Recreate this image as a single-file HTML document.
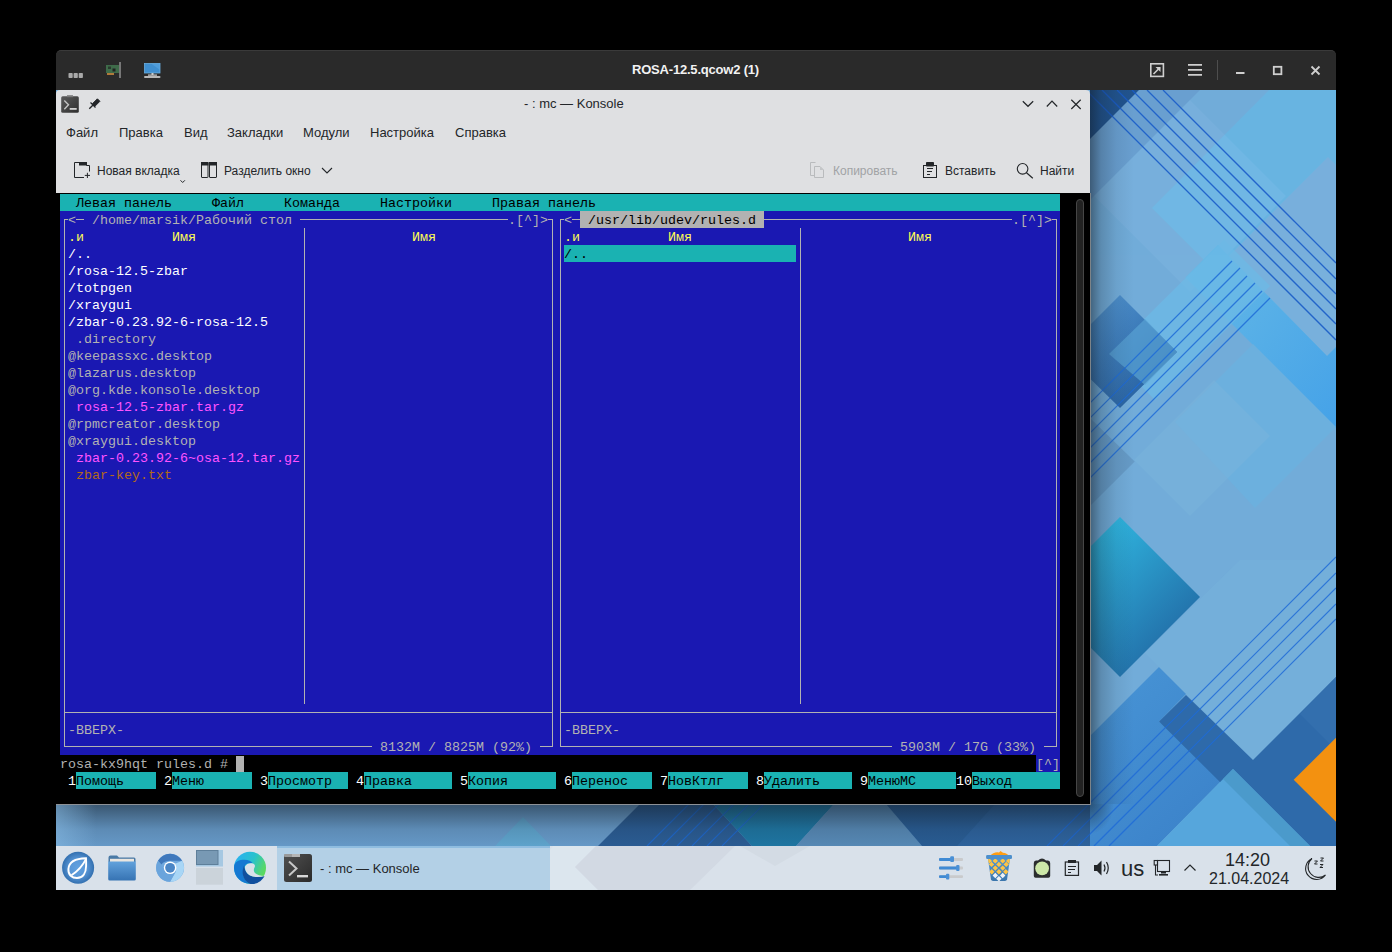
<!DOCTYPE html>
<html><head><meta charset="utf-8">
<style>
*{margin:0;padding:0;box-sizing:border-box}
html,body{width:1392px;height:952px;background:#000;overflow:hidden;position:relative;font-family:"Liberation Sans",sans-serif}
#vm{position:absolute;left:56px;top:50px;width:1280px;height:840px;border-radius:5px 5px 0 0;overflow:hidden;background:#2a2a2a}
#vmtitle{position:absolute;left:0;top:0;width:1280px;height:40px;background:#2a2a2a;border-top:1px solid #3a3a3a;border-radius:5px 5px 0 0}
#wall{position:absolute;left:0;top:40px;width:1280px;height:756px}
#konsole{position:absolute;left:56px;top:90px;width:1034px;height:715px;background:#dfe0e2;border-radius:4px 4px 0 0;overflow:hidden}
#term{position:absolute;left:0;top:103px;width:1034px;height:611px;background:#000}
#kbot{position:absolute;left:0;top:714px;width:1034px;height:1px;background:#8d9196}
#sb{position:absolute;left:1020px;top:109px;width:8px;height:598px;border-radius:4px;background:#222;border:1px solid #464646}
.b{position:absolute;height:17px}
.t{position:absolute;height:17px;line-height:19px;font-family:"Liberation Mono",monospace;font-size:13.333px;white-space:pre}
.l{position:absolute;background:#b2b2b2}
.ui{position:absolute;white-space:pre;color:#232629;font-size:13px;line-height:16px}
#taskbar{position:absolute;left:56px;top:846px;width:1280px;height:44px;background:#d9e1ea}
#task{position:absolute;left:221px;top:0;width:273px;height:44px;background:#b3d0e6;border-top:2px solid #8fbde0}
#ov{position:absolute;left:0;top:0}
</style></head><body>
<div id="vm">
  <div id="vmtitle"></div>
  <svg id="wall" width="1280" height="756" viewBox="56 90 1280 756">
<defs>
<linearGradient id="cyd" x1="0" y1="0" x2="1" y2="1"><stop offset="0.2" stop-color="#30b9e2"/><stop offset="1" stop-color="#1e5796"/></linearGradient>
<linearGradient id="bld" x1="0" y1="0" x2="1" y2="1"><stop offset="0" stop-color="#5aa0dc"/><stop offset="1" stop-color="#1d5494"/></linearGradient>
<linearGradient id="shd" x1="0" y1="0" x2="1" y2="0"><stop offset="0" stop-color="#101820" stop-opacity="0.5"/><stop offset="0.25" stop-color="#101820" stop-opacity="0.22"/><stop offset="0.6" stop-color="#101820" stop-opacity="0.07"/><stop offset="1" stop-color="#101820" stop-opacity="0"/></linearGradient>
<linearGradient id="shdb" x1="0" y1="0" x2="0" y2="1"><stop offset="0" stop-color="#101820" stop-opacity="0.55"/><stop offset="0.6" stop-color="#101820" stop-opacity="0.15"/><stop offset="1" stop-color="#101820" stop-opacity="0.05"/></linearGradient>
<linearGradient id="shdl" x1="0" y1="0" x2="1" y2="0"><stop offset="0" stop-color="#8cc0e8" stop-opacity="0.5"/><stop offset="1" stop-color="#8cc0e8" stop-opacity="0"/></linearGradient>
<linearGradient id="lbg" x1="0" y1="0" x2="1" y2="1"><stop offset="0" stop-color="#4a98d8"/><stop offset="1" stop-color="#3a80c8"/></linearGradient>
<radialGradient id="shdc" cx="0" cy="0" r="1"><stop offset="0" stop-color="#101820" stop-opacity="0.5"/><stop offset="1" stop-color="#101820" stop-opacity="0"/></radialGradient>
<linearGradient id="brb" x1="0" y1="0" x2="1" y2="1"><stop offset="0" stop-color="#66bae6"/><stop offset="1" stop-color="#45a2e8"/></linearGradient>
</defs>
<rect x="56" y="90" width="1280" height="756" fill="#72acd9"/>
<!-- upper right light -->
<polygon points="1090,139 1139,90 1200,90 1090,200" fill="#6a9fd0"/>
<polygon points="1090,90 1139,90 1090,139" fill="#22558f"/>
<polygon points="1269,90 1336,90 1336,392 1152,208" fill="#69b4e2"/>
<polygon points="1190,100 1286,196 1190,292 1094,196" fill="#9ad0f2" opacity="0.14"/>
<polygon points="1229,256 1328,157 1336,165 1336,347 1327,356" fill="#78b0dc"/>
<polygon points="1218,245 1327,356 1336,347 1336,428 1185.5,277.5" fill="url(#brb)"/>
<polygon points="1109,354 1224,240 1270,286 1155,400" fill="#6cbae6" opacity="0.75"/>
<polygon points="1253,344 1336,427 1255,508 1175,422" fill="#6cb0de"/>
<polygon points="1134,460 1214,380 1270,436 1190,516" fill="#7ab4dc" opacity="0.5"/>
<polygon points="1090,418 1134.7,461.5 1090,506" fill="#5f8fba" opacity="0.6"/>
<!-- blue diamond -->
<polygon points="1120,295 1177,352 1120,408 1063,352" fill="url(#bld)"/>
<polygon points="1109,354 1145,319 1177,352 1145,385" fill="#58a2d4" opacity="0.7"/>
<!-- cyan diamond -->
<polygon points="1120,517 1200,597 1120,677 1040,597" fill="url(#cyd)"/>
<!-- lower left blue -->
<polygon points="1159,667 1186,694 1159,721.5 1233,769 1157,846 1040,846 1040,786" fill="url(#lbg)"/>
<polygon points="1145,653 1253,760 1336,677 1336,560 1240,560" fill="#78b4dc" opacity="0.45"/>
<!-- dark band -->
<polygon points="1159,721.5 1186,695 1253,760 1336,677 1336,846 1270,846 1220,782" fill="#2e6aaa"/>
<polygon points="1300,714 1336,677 1336,750" fill="#336fae"/>
<!-- bottom light triangle -->
<polygon points="1233,769 1310,846 1157,846" fill="#56a6dc"/>
<polygon points="1233,769 1310,846 1290,846 1223,779" fill="#4b9acb"/>
<!-- orange -->
<polygon points="1293.7,779.8 1336,737.8 1336,821.7" fill="#f39110"/>
<!-- bottom strip under konsole -->
<rect x="56" y="804" width="1034" height="42" fill="#6a9fcf"/>
<polygon points="495,846 523,817 551,846" fill="#62aad4"/>
<polygon points="598,846 640,804 713,804 752,846" fill="#2c5f98"/>
<polygon points="713,804 834,804 796,846 752,846" fill="#1f7aa8"/>
<polygon points="834,804 886,804 922,846 796,846" fill="#5a8ebc"/>
<polygon points="886,804 1090,804 1090,846 922,846" fill="#2a5f98"/>
<polygon points="995,804 1090,804 1090,846 957,846" fill="#2f66a2"/>
<!-- lines \ -->
<g stroke="#1a5cc8" stroke-width="1.3" opacity="0.9">
<line x1="1086" y1="90" x2="1336" y2="340"/>
<line x1="1102" y1="90" x2="1336" y2="324"/>
<line x1="1117" y1="90" x2="1336" y2="309"/>
<line x1="1132" y1="90" x2="1336" y2="294"/>
<line x1="1147" y1="90" x2="1336" y2="279"/>
<line x1="1163" y1="90" x2="1336" y2="263"/>
</g>
<!-- lines / upper -->
<g stroke="#1f6cd8" stroke-width="1.2" opacity="0.85">
<line x1="647" y1="846" x2="1232" y2="261"/>
<line x1="662" y1="846" x2="1240" y2="268"/>
<line x1="677" y1="846" x2="1247" y2="276"/>
<line x1="692" y1="846" x2="1255" y2="283"/>
<line x1="707" y1="846" x2="1262" y2="291"/>
<line x1="722" y1="846" x2="1270" y2="298"/>
</g>
<!-- lines / lower -->
<g stroke="#1f6cd8" stroke-width="1.2" opacity="0.85">
<line x1="1047" y1="846" x2="1336" y2="557"/>
<line x1="1063" y1="846" x2="1336" y2="573"/>
<line x1="1078" y1="846" x2="1336" y2="588"/>
<line x1="1094" y1="846" x2="1336" y2="604"/>
<line x1="1109" y1="846" x2="1336" y2="619"/>
</g>
<!-- konsole shadows -->
<rect x="1090" y="90" width="44" height="714" fill="url(#shd)"/>
<rect x="56" y="804" width="1034" height="42" fill="url(#shdb)"/><rect x="56" y="804" width="40" height="42" fill="url(#shdl)"/><rect x="1090" y="804" width="24" height="30" fill="url(#shdc)"/>
<polygon points="1090,804 1116,804 1116,834" fill="#72acd9" opacity="0"/>

  </svg>
</div>
<div class="ui" style="left:632px;top:62px;color:#f2f2f2;font-size:13px;font-weight:bold;letter-spacing:-0.2px">ROSA-12.5.qcow2 (1)</div>

<div id="konsole">
  <div id="term"></div>
  <div id="sb"></div>
  <div id="kbot"></div>
</div>
<div class="ui" style="left:524px;top:96px">- : mc — Konsole</div>
<div class="ui" style="left:66px;top:125px">Файл</div>
<div class="ui" style="left:119px;top:125px">Правка</div>
<div class="ui" style="left:184px;top:125px">Вид</div>
<div class="ui" style="left:227px;top:125px">Закладки</div>
<div class="ui" style="left:303px;top:125px">Модули</div>
<div class="ui" style="left:370px;top:125px">Настройка</div>
<div class="ui" style="left:455px;top:125px">Справка</div>
<div class="ui" style="left:97px;top:163px;font-size:12px">Новая вкладка</div>
<div class="ui" style="left:224px;top:163px;font-size:12px">Разделить окно</div>
<div class="ui" style="left:833px;top:163px;color:#a1a3a5;font-size:12px">Копировать</div>
<div class="ui" style="left:945px;top:163px;font-size:12px">Вставить</div>
<div class="ui" style="left:1040px;top:163px;font-size:12px">Найти</div>

<div class="b" style="left:60px;top:194px;width:1000px;background:#1ab2b2"></div>
<div class="t" style="left:76px;top:194px;color:#000000">Левая панель</div>
<div class="t" style="left:212px;top:194px;color:#000000">Файл</div>
<div class="t" style="left:284px;top:194px;color:#000000">Команда</div>
<div class="t" style="left:380px;top:194px;color:#000000">Настройки</div>
<div class="t" style="left:492px;top:194px;color:#000000">Правая панель</div>
<div class="b" style="left:60px;top:211px;width:520px;background:#1a18b2"></div>
<div class="b" style="left:580px;top:211px;width:184px;background:#b2b2b2"></div>
<div class="b" style="left:764px;top:211px;width:296px;background:#1a18b2"></div>
<div class="t" style="left:68px;top:211px;color:#b2b2b2">&lt;</div>
<div class="t" style="left:92px;top:211px;color:#b2b2b2">/home/marsik/Рабочий стол</div>
<div class="t" style="left:508px;top:211px;color:#b2b2b2">.[^]&gt;</div>
<div class="t" style="left:564px;top:211px;color:#b2b2b2">&lt;</div>
<div class="t" style="left:588px;top:211px;color:#000000">/usr/lib/udev/rules.d</div>
<div class="t" style="left:1012px;top:211px;color:#b2b2b2">.[^]&gt;</div>
<div class="b" style="left:60px;top:228px;width:1000px;background:#1a18b2"></div>
<div class="t" style="left:68px;top:228px;color:#ffff54">.и</div>
<div class="t" style="left:172px;top:228px;color:#ffff54">Имя</div>
<div class="t" style="left:412px;top:228px;color:#ffff54">Имя</div>
<div class="t" style="left:564px;top:228px;color:#ffff54">.и</div>
<div class="t" style="left:668px;top:228px;color:#ffff54">Имя</div>
<div class="t" style="left:908px;top:228px;color:#ffff54">Имя</div>
<div class="b" style="left:60px;top:245px;width:504px;background:#1a18b2"></div>
<div class="b" style="left:564px;top:245px;width:232px;background:#1ab2b2"></div>
<div class="b" style="left:796px;top:245px;width:264px;background:#1a18b2"></div>
<div class="t" style="left:68px;top:245px;color:#ffffff">/..</div>
<div class="t" style="left:564px;top:245px;color:#000000">/..</div>
<div class="b" style="left:60px;top:262px;width:1000px;background:#1a18b2"></div>
<div class="t" style="left:68px;top:262px;color:#ffffff">/rosa-12.5-zbar</div>
<div class="b" style="left:60px;top:279px;width:1000px;background:#1a18b2"></div>
<div class="t" style="left:68px;top:279px;color:#ffffff">/totpgen</div>
<div class="b" style="left:60px;top:296px;width:1000px;background:#1a18b2"></div>
<div class="t" style="left:68px;top:296px;color:#ffffff">/xraygui</div>
<div class="b" style="left:60px;top:313px;width:1000px;background:#1a18b2"></div>
<div class="t" style="left:68px;top:313px;color:#ffffff">/zbar-0.23.92-6-rosa-12.5</div>
<div class="b" style="left:60px;top:330px;width:1000px;background:#1a18b2"></div>
<div class="t" style="left:76px;top:330px;color:#b2b2b2">.directory</div>
<div class="b" style="left:60px;top:347px;width:1000px;background:#1a18b2"></div>
<div class="t" style="left:68px;top:347px;color:#b2b2b2">@keepassxc.desktop</div>
<div class="b" style="left:60px;top:364px;width:1000px;background:#1a18b2"></div>
<div class="t" style="left:68px;top:364px;color:#b2b2b2">@lazarus.desktop</div>
<div class="b" style="left:60px;top:381px;width:1000px;background:#1a18b2"></div>
<div class="t" style="left:68px;top:381px;color:#b2b2b2">@org.kde.konsole.desktop</div>
<div class="b" style="left:60px;top:398px;width:1000px;background:#1a18b2"></div>
<div class="t" style="left:76px;top:398px;color:#ff54ff">rosa-12.5-zbar.tar.gz</div>
<div class="b" style="left:60px;top:415px;width:1000px;background:#1a18b2"></div>
<div class="t" style="left:68px;top:415px;color:#b2b2b2">@rpmcreator.desktop</div>
<div class="b" style="left:60px;top:432px;width:1000px;background:#1a18b2"></div>
<div class="t" style="left:68px;top:432px;color:#b2b2b2">@xraygui.desktop</div>
<div class="b" style="left:60px;top:449px;width:1000px;background:#1a18b2"></div>
<div class="t" style="left:76px;top:449px;color:#ff54ff">zbar-0.23.92-6~osa-12.tar.gz</div>
<div class="b" style="left:60px;top:466px;width:1000px;background:#1a18b2"></div>
<div class="t" style="left:76px;top:466px;color:#b26818">zbar-key.txt</div>
<div class="b" style="left:60px;top:483px;width:1000px;background:#1a18b2"></div>
<div class="b" style="left:60px;top:500px;width:1000px;background:#1a18b2"></div>
<div class="b" style="left:60px;top:517px;width:1000px;background:#1a18b2"></div>
<div class="b" style="left:60px;top:534px;width:1000px;background:#1a18b2"></div>
<div class="b" style="left:60px;top:551px;width:1000px;background:#1a18b2"></div>
<div class="b" style="left:60px;top:568px;width:1000px;background:#1a18b2"></div>
<div class="b" style="left:60px;top:585px;width:1000px;background:#1a18b2"></div>
<div class="b" style="left:60px;top:602px;width:1000px;background:#1a18b2"></div>
<div class="b" style="left:60px;top:619px;width:1000px;background:#1a18b2"></div>
<div class="b" style="left:60px;top:636px;width:1000px;background:#1a18b2"></div>
<div class="b" style="left:60px;top:653px;width:1000px;background:#1a18b2"></div>
<div class="b" style="left:60px;top:670px;width:1000px;background:#1a18b2"></div>
<div class="b" style="left:60px;top:687px;width:1000px;background:#1a18b2"></div>
<div class="b" style="left:60px;top:704px;width:1000px;background:#1a18b2"></div>
<div class="b" style="left:60px;top:721px;width:1000px;background:#1a18b2"></div>
<div class="t" style="left:68px;top:721px;color:#b2b2b2">-ВВЕРХ-</div>
<div class="t" style="left:564px;top:721px;color:#b2b2b2">-ВВЕРХ-</div>
<div class="b" style="left:60px;top:738px;width:1000px;background:#1a18b2"></div>
<div class="t" style="left:380px;top:738px;color:#b2b2b2">8132M / 8825M (92%)</div>
<div class="t" style="left:900px;top:738px;color:#b2b2b2">5903M / 17G (33%)</div>
<div class="b" style="left:1036px;top:755px;width:24px;background:#1a18b2"></div>
<div class="t" style="left:60px;top:755px;color:#b2b2b2">rosa-kx9hqt rules.d #</div>
<div class="t" style="left:1036px;top:755px;color:#b2b2b2">[^]</div>
<div class="b" style="left:76px;top:772px;width:80px;background:#1ab2b2"></div>
<div class="b" style="left:172px;top:772px;width:80px;background:#1ab2b2"></div>
<div class="b" style="left:268px;top:772px;width:80px;background:#1ab2b2"></div>
<div class="b" style="left:364px;top:772px;width:88px;background:#1ab2b2"></div>
<div class="b" style="left:468px;top:772px;width:88px;background:#1ab2b2"></div>
<div class="b" style="left:572px;top:772px;width:80px;background:#1ab2b2"></div>
<div class="b" style="left:668px;top:772px;width:80px;background:#1ab2b2"></div>
<div class="b" style="left:764px;top:772px;width:88px;background:#1ab2b2"></div>
<div class="b" style="left:868px;top:772px;width:88px;background:#1ab2b2"></div>
<div class="b" style="left:972px;top:772px;width:88px;background:#1ab2b2"></div>
<div class="t" style="left:68px;top:772px;color:#ffffff">1</div>
<div class="t" style="left:76px;top:772px;color:#000000">Помощь</div>
<div class="t" style="left:164px;top:772px;color:#ffffff">2</div>
<div class="t" style="left:172px;top:772px;color:#000000">Меню</div>
<div class="t" style="left:260px;top:772px;color:#ffffff">3</div>
<div class="t" style="left:268px;top:772px;color:#000000">Просмотр</div>
<div class="t" style="left:356px;top:772px;color:#ffffff">4</div>
<div class="t" style="left:364px;top:772px;color:#000000">Правка</div>
<div class="t" style="left:460px;top:772px;color:#ffffff">5</div>
<div class="t" style="left:468px;top:772px;color:#000000">Копия</div>
<div class="t" style="left:564px;top:772px;color:#ffffff">6</div>
<div class="t" style="left:572px;top:772px;color:#000000">Перенос</div>
<div class="t" style="left:660px;top:772px;color:#ffffff">7</div>
<div class="t" style="left:668px;top:772px;color:#000000">НовКтлг</div>
<div class="t" style="left:756px;top:772px;color:#ffffff">8</div>
<div class="t" style="left:764px;top:772px;color:#000000">Удалить</div>
<div class="t" style="left:860px;top:772px;color:#ffffff">9</div>
<div class="t" style="left:868px;top:772px;color:#000000">МенюМС</div>
<div class="t" style="left:956px;top:772px;color:#ffffff">10</div>
<div class="t" style="left:972px;top:772px;color:#000000">Выход</div>
<div class="b" style="left:236px;top:756px;width:8px;height:16px;background:#b2b2b2"></div>
<div class="l" style="left:64px;top:219px;width:1px;height:528px"></div>
<div class="l" style="left:552px;top:219px;width:1px;height:528px"></div>
<div class="l" style="left:304px;top:228px;width:1px;height:476px"></div>
<div class="l" style="left:64px;top:712px;width:489px;height:1px"></div>
<div class="l" style="left:560px;top:219px;width:1px;height:528px"></div>
<div class="l" style="left:1056px;top:219px;width:1px;height:528px"></div>
<div class="l" style="left:800px;top:228px;width:1px;height:476px"></div>
<div class="l" style="left:560px;top:712px;width:497px;height:1px"></div>
<div class="l" style="left:64px;top:219px;width:4px;height:1px"></div>
<div class="l" style="left:76px;top:219px;width:8px;height:1px"></div>
<div class="l" style="left:300px;top:219px;width:208px;height:1px"></div>
<div class="l" style="left:548px;top:219px;width:5px;height:1px"></div>
<div class="l" style="left:560px;top:219px;width:4px;height:1px"></div>
<div class="l" style="left:572px;top:219px;width:8px;height:1px"></div>
<div class="l" style="left:764px;top:219px;width:248px;height:1px"></div>
<div class="l" style="left:1052px;top:219px;width:5px;height:1px"></div>
<div class="l" style="left:64px;top:746px;width:308px;height:1px"></div>
<div class="l" style="left:540px;top:746px;width:13px;height:1px"></div>
<div class="l" style="left:560px;top:746px;width:332px;height:1px"></div>
<div class="l" style="left:1044px;top:746px;width:13px;height:1px"></div>

<div style="position:absolute;left:1090px;top:193px;width:1px;height:612px;background:#7d8388"></div>
<div id="taskbar"><div id="task"></div></div>
<div class="ui" style="left:320px;top:861px;font-size:13px">- : mc — Konsole</div>
<div class="ui" style="left:1121px;top:857px;font-size:22px;line-height:24px">us</div>
<div class="ui" style="left:1225px;top:850px;font-size:18px;line-height:20px">14:20</div>
<div class="ui" style="left:1209px;top:870px;font-size:16px;line-height:18px">21.04.2024</div>

<svg id="ov" width="1392" height="952" viewBox="0 0 1392 952">
<!-- VM titlebar left -->
<g fill="#a9a9a9"><rect x="68.5" y="73" width="4.2" height="5" rx="0.8"/><rect x="73.6" y="73" width="4.2" height="5" rx="0.8"/><rect x="78.7" y="73" width="4.2" height="5" rx="0.8"/></g>
<rect x="106" y="65" width="13" height="8" fill="#3f6b4a"/><rect x="108" y="66.5" width="3" height="2.5" fill="#2a3a2e"/><rect x="112.5" y="68.5" width="3" height="3" fill="#222"/>
<rect x="107" y="73" width="7" height="2" fill="#b07a3a"/><rect x="119" y="62" width="2" height="16" fill="#777"/>
<rect x="144.5" y="63.5" width="15.5" height="9.5" fill="#3f8fd0" stroke="#6aaee0" stroke-width="0.8"/><path d="M151 63.5 L160 63.5 L160 70 Z" fill="#5aa6e2" opacity="0.6"/>
<rect x="151.5" y="73" width="2" height="2" fill="#ccc"/><rect x="148" y="74.5" width="9" height="1.2" fill="#ccc"/><rect x="144" y="76" width="16.5" height="2" rx="1" fill="#b8b8b8"/>
<!-- VM titlebar right -->
<g fill="none" stroke="#cfcfcf" stroke-width="1.6">
<rect x="1150.8" y="63.8" width="12.6" height="12.6"/>
<path d="M1153.5 74 L1160 67.5"/>
<path d="M1188 64.8 H1202 M1188 69.9 H1202 M1188 74.9 H1202" stroke-width="1.8"/>
<rect x="1273.8" y="66.8" width="7.6" height="7.4" stroke-width="1.8"/>
<path d="M1311.5 66.5 L1319.5 74.5 M1319.5 66.5 L1311.5 74.5" stroke-width="1.8"/>
</g>
<path d="M1155.5 67 H1160.5 V72 Z" fill="#cfcfcf"/>
<rect x="1217" y="60" width="1" height="20" fill="#4e4e4e"/>
<rect x="1236" y="72" width="8.5" height="2" fill="#cfcfcf"/>
<!-- Konsole titlebar -->
<defs><linearGradient id="tg" x1="0" y1="0" x2="1" y2="1"><stop offset="0" stop-color="#5a5a5a"/><stop offset="1" stop-color="#2e2e2e"/></linearGradient></defs>
<rect x="61.2" y="96.2" width="17.6" height="16.6" rx="1.5" fill="url(#tg)"/>
<rect x="67" y="95.2" width="6" height="2" fill="#7a7a7a"/>
<path d="M64.3 100.5 L68.5 104.8 L64.3 109.2" fill="none" stroke="#c4c4c4" stroke-width="1.4"/>
<rect x="69.7" y="108" width="7" height="1.8" fill="#d0d0d0"/>
<g fill="#232629" stroke="#232629">
<path d="M92.6 103.6 L97.4 98.8 L99.9 101.3 L95.1 106.1 Z" stroke-width="1"/>
<path d="M90.5 102.5 L95.5 107.5" stroke-width="1.3" fill="none"/>
<path d="M89.3 108.8 L93 105" stroke-width="1.3" fill="none"/>
</g>
<g fill="none" stroke="#232629" stroke-width="1.2">
<path d="M1022.8 101.2 L1028 106.3 L1033.2 101.2"/>
<path d="M1046.8 106.5 L1052 101.2 L1057.2 106.5"/>
<path d="M1071.3 99.8 L1080.7 109 M1080.7 99.8 L1071.3 109"/>
</g>
<!-- toolbar -->
<g fill="none" stroke="#232629" stroke-width="1">
<path d="M84 177.5 H74.5 V162.5 H86.5 V165.5 H89.5 V171.5"/>
<path d="M87.4 172.8 V178 M84.8 175.4 H90"/>
<rect x="201.5" y="162.5" width="6.5" height="15" rx="0.5"/>
<rect x="209.5" y="162.5" width="7" height="15" rx="0.5"/>
<path d="M180.5 180.3 L182.7 182.5 L184.9 180.3"/>
<path d="M322 168 L327 173 L332 168" stroke-width="1.1"/>
<rect x="923.5" y="165.5" width="13" height="12" />
<path d="M927 168.5 H933 M927 171.5 H932 M927 174.5 H930"/>
<circle cx="1022.6" cy="168.8" r="5.3" stroke-width="1.1"/>
<path d="M1026.5 172.8 L1032.8 178.2" stroke-width="1.2"/>
</g>
<rect x="79" y="162" width="8" height="3.5" fill="#232629"/>
<rect x="201" y="162" width="7.5" height="3.5" fill="#232629"/><rect x="209" y="162" width="8" height="3.5" fill="#232629"/>
<rect x="926" y="162" width="8" height="4.5" rx="0.8" fill="#232629"/>
<g fill="none" stroke="#b9bbbd" stroke-width="1">
<path d="M814.5 175.5 H810.5 V162.5 H815.5"/>
<path d="M814.5 166.5 H820 L823.5 170 V177.5 H814.5 Z"/>
</g>
<path d="M820 166.5 V170 H823.5 Z" fill="#c4c6c8"/>
<!-- taskbar -->
<polygon points="550,850 550,890 598,890 575,867 596,846 553,846" fill="#dce6ee"/>
<polygon points="575,867 596,846 735,846 690,890 598,890" fill="#d2d9e3"/>
<polygon points="740,846 810,846 775,866" fill="#d3dbe4"/>
<defs>
<radialGradient id="rosag" cx="0.5" cy="0.5" r="0.5"><stop offset="0" stop-color="#62a2e0"/><stop offset="0.55" stop-color="#5896d6"/><stop offset="1" stop-color="#3370b0"/></radialGradient>
<linearGradient id="fold" x1="0" y1="0" x2="0" y2="1"><stop offset="0" stop-color="#62a2dc"/><stop offset="1" stop-color="#3673b3"/></linearGradient>
<linearGradient id="edg" x1="0" y1="0.2" x2="1" y2="0.7"><stop offset="0" stop-color="#2ab0f2"/><stop offset="0.5" stop-color="#28c2cc"/><stop offset="0.85" stop-color="#55d66e"/><stop offset="1" stop-color="#5edc50"/></linearGradient>
<linearGradient id="kon" x1="0" y1="0" x2="1" y2="1"><stop offset="0" stop-color="#505050"/><stop offset="1" stop-color="#2a2a2a"/></linearGradient>
</defs>
<circle cx="78.1" cy="867.8" r="16" fill="url(#rosag)"/>
<path d="M86 858.3 C78 858.5 69 861 68.4 869 C68 875 72 878 77 878 C83 878 86 873 86.1 866 C86.2 862 86.1 860 86 858.3 Z" fill="none" stroke="#fff" stroke-width="1.9"/>
<path d="M71.5 875.2 C77 871.5 82.5 866 85.8 859.3" fill="none" stroke="#fff" stroke-width="1.9"/>
<path d="M108.5 857.5 Q108.5 855.5 110.5 855.5 H117 L119 857.5 H134 Q135.5 857.5 135.5 859 V862 H108.5 Z" fill="#4a7aa6"/>
<rect x="110" y="858.8" width="24" height="3.5" fill="#eae6e0"/>
<path d="M108.2 861.5 H135.8 V879 Q135.8 880.5 134.3 880.5 H109.7 Q108.2 880.5 108.2 879 Z" fill="url(#fold)"/>
<circle cx="170.1" cy="867.8" r="14" fill="#6fa8de"/>
<path d="M157.98 860.8 A14 14 0 0 1 182.2 860.8 L170.1 860.8 Q164 860.8 161.5 864.5 Z" fill="#3f78bc"/>
<path d="M182.2 860.8 A14 14 0 0 1 170.1 881.8 L175.5 872 Q177 868 174.5 864 Z" fill="#a8d6f6"/>
<path d="M157.98 860.8 A14 14 0 0 0 170.1 881.8 L175.5 872 Q169 874 165.5 871 Z" fill="#6aa4dc"/>
<circle cx="170.1" cy="867.8" r="6.3" fill="#fff"/><circle cx="170.1" cy="867.8" r="4.9" fill="#4a86c6"/>
<rect x="196" y="850" width="27" height="16.5" fill="#a6c8e2"/>
<rect x="196.5" y="850.5" width="21.5" height="14" fill="#7899b4" stroke="#5e7f9a" stroke-width="1"/>
<rect x="196" y="868" width="27" height="16.7" fill="#cbd3da"/>
<circle cx="250" cy="867.7" r="16" fill="url(#edg)"/>
<path d="M234 868 C234 861 239.5 859.8 244.5 859.8 C248.5 859.8 251.5 861.2 253 863.5 C250.5 862.5 247 863 245 865.5 C243 868 242.5 872 243.5 876 C244.5 880 247.5 883 251 883.7 A16 16 0 0 1 234 868 Z" fill="#1478d2"/>
<path d="M244.6 864.5 C241 871 242 880.5 250.5 884 C257 884.5 262 881 264.5 876 C260 877.5 254 877.5 250 875.5 C246.5 873.5 244.5 870 244.2 865.5 Z" fill="#104f9e"/>
<path d="M253 863.5 C250 862.5 246.5 863.5 245 866.5 C244.5 870 246.5 873.5 250 875.5 C254 877.5 260 877.5 264.5 876 C261 876 257 875 255 873 C253.5 871.5 253.6 869 254.5 867.5 C255.5 866 254.8 864.3 253 863.5 Z" fill="#d9e1ea"/>
<rect x="284" y="854" width="28" height="28" rx="2.5" fill="url(#kon)"/>
<rect x="284" y="854" width="9" height="3" rx="1" fill="#9a9a9a"/><rect x="292" y="854" width="8" height="3" fill="#b5b5b5"/>
<path d="M289 861.5 L296.5 868.5 L289 875.5" fill="none" stroke="#c8c8c8" stroke-width="2"/>
<rect x="297" y="875" width="11" height="2.4" fill="#d8d8d8"/>
<!-- tray -->
<g>
<rect x="939" y="858" width="24" height="2.9" rx="1" fill="#c9cacc"/><rect x="939" y="858" width="12" height="2.9" rx="1" fill="#3f8ad4"/><rect x="950.2" y="856.3" width="3.8" height="5.8" rx="1" fill="#4a90d6"/>
<rect x="939" y="866.6" width="24" height="2.9" rx="1" fill="#c9cacc"/><rect x="939" y="866.6" width="18" height="2.9" rx="1" fill="#3f8ad4"/><rect x="956.1" y="865" width="3.4" height="6" rx="1" fill="#4a90d6"/>
<rect x="939" y="875.2" width="24" height="2.9" rx="1" fill="#c9cacc"/><rect x="939" y="875.2" width="8" height="2.9" rx="1" fill="#3f8ad4"/><rect x="946" y="873.8" width="3.3" height="5.6" rx="1" fill="#4a90d6"/>
</g>
<path d="M990 856 Q994 851.5 999 852.5 L1000.5 851 L1003 852.8 Q1007 853 1009 856 Z" fill="#ff9d12"/>
<defs><linearGradient id="trg" x1="0" y1="0" x2="0" y2="1"><stop offset="0" stop-color="#4f95d2"/><stop offset="1" stop-color="#3b76ad"/></linearGradient></defs>
<clipPath id="trc"><path d="M988 858.7 H1010 L1007 879.8 Q1006.5 880.9 1005 880.9 H993 Q991.5 880.9 991 879.8 Z"/></clipPath>
<path d="M988 858.7 H1010 L1007 879.8 Q1006.5 880.9 1005 880.9 H993 Q991.5 880.9 991 879.8 Z" fill="url(#trg)"/>
<g clip-path="url(#trc)"><path d="M989.3 858.1999999999999 L992.0 860.9 L989.3 863.6 L986.5999999999999 860.9 Z" fill="#ffc445"/><path d="M995.3 858.1999999999999 L998.0 860.9 L995.3 863.6 L992.5999999999999 860.9 Z" fill="#ffc445"/><path d="M1002.7 858.1999999999999 L1005.4000000000001 860.9 L1002.7 863.6 L1000.0 860.9 Z" fill="#ffc445"/><path d="M1008.7 858.1999999999999 L1011.4000000000001 860.9 L1008.7 863.6 L1006.0 860.9 Z" fill="#ffc445"/><path d="M991.5 861.6999999999999 L994.2 864.4 L991.5 867.1 L988.8 864.4 Z" fill="#ffc445"/><path d="M998.9 861.6999999999999 L1001.6 864.4 L998.9 867.1 L996.1999999999999 864.4 Z" fill="#ffc445"/><path d="M1006.2 861.6999999999999 L1008.9000000000001 864.4 L1006.2 867.1 L1003.5 864.4 Z" fill="#ffc445"/><path d="M995.3 865.4 L998.0 868.1 L995.3 870.8000000000001 L992.5999999999999 868.1 Z" fill="#ffc445"/><path d="M1002.7 865.4 L1005.4000000000001 868.1 L1002.7 870.8000000000001 L1000.0 868.1 Z" fill="#ffc445"/><path d="M991.8 869.0999999999999 L994.5 871.8 L991.8 874.5 L989.0999999999999 871.8 Z" fill="#ffc445"/><path d="M998.9 869.0999999999999 L1001.6 871.8 L998.9 874.5 L996.1999999999999 871.8 Z" fill="#ffc445"/><path d="M1005.8 869.0999999999999 L1008.5 871.8 L1005.8 874.5 L1003.0999999999999 871.8 Z" fill="#ffc445"/><path d="M995.3 872.8 L998.0 875.5 L995.3 878.2 L992.5999999999999 875.5 Z" fill="#eef2f6"/><path d="M1002.7 872.8 L1005.4000000000001 875.5 L1002.7 878.2 L1000.0 875.5 Z" fill="#eef2f6"/><path d="M998.9 876.0 L1001.6 878.7 L998.9 881.4000000000001 L996.1999999999999 878.7 Z" fill="#eef2f6"/></g>
<rect x="986.1" y="855.1" width="25.9" height="3.8" rx="1.2" fill="#4d8fcc"/>
<path d="M1033.8 863 Q1033.8 860.5 1036 860.5 L1038 860.5 Q1042 856.5 1046 860.5 L1048 860.5 Q1050.2 860.5 1050.2 863 V876 Q1050.2 877.8 1048.4 877.8 H1035.6 Q1033.8 877.8 1033.8 876 Z" fill="#2b2d2e"/>
<circle cx="1042.1" cy="868.3" r="6.9" fill="#cde8a8"/>
<g fill="none" stroke="#232629" stroke-width="1.2">
<rect x="1065.3" y="862" width="13.2" height="13.4"/>
<path d="M1068 866.5 H1076 M1068 869.5 H1075 M1068 872.5 H1071"/>
</g>
<rect x="1068" y="860" width="8" height="3" fill="#232629"/>
<path d="M1094 865 H1097 L1101.5 860.5 V875.5 L1097 871 H1094 Z" fill="#232629"/>
<path d="M1104 864.5 Q1106 868 1104 871.5 M1106.5 862 Q1110 868 1106.5 874" fill="none" stroke="#232629" stroke-width="1.2"/>
<g fill="none" stroke="#232629" stroke-width="1.1">
<rect x="1157.5" y="860.5" width="12" height="11"/>
<rect x="1154.2" y="860.5" width="3.3" height="4.5"/>
<path d="M1155.5 865 V875 H1158"/>
<path d="M1184.5 870.5 L1190 865 L1195.5 870.5" stroke-width="1.2"/>
<path d="M1312 858.5 A11 11 0 1 0 1325.5 875 A9 9 0 0 1 1312 858.5 Z" stroke-width="1.1"/>
</g>
<rect x="1161" y="871.5" width="5" height="2" fill="#232629"/><rect x="1159" y="874" width="9" height="1.6" fill="#232629"/>
<g fill="none" stroke="#232629" stroke-width="1"><path d="M1314.5 861 h3 l-3 3 h3 M1320.5 858 h3 l-3 3 h3 M1320 864.5 h3 l-3 3 h3"/></g>

</svg>
</body></html>
